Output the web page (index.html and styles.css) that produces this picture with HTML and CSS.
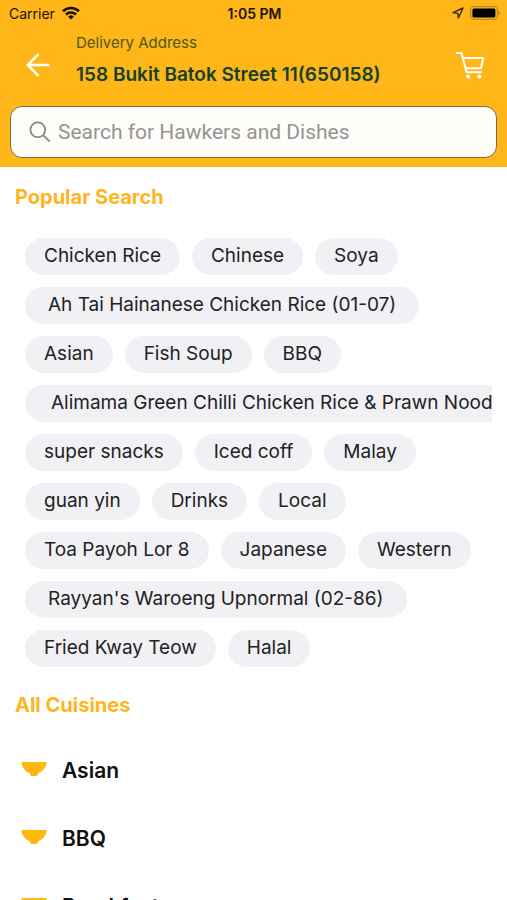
FILE: index.html
```html
<!DOCTYPE html>
<html lang="en">
<head>
<meta charset="utf-8">
<meta name="viewport" content="width=device-width, initial-scale=1">
<title>Search</title>
<link rel="stylesheet" href="styles.css">
</head>
<body>
<header class="top">
  <div class="status">
    <div class="status-left">
      <span>Carrier</span>
      <svg width="18" height="14" viewBox="0 0 18 14" fill="none" stroke="#1a1200" stroke-width="2.6">
        <path d="M1 5.200a11.500 11.500 0 0 1 16 0M3.900 8.500a7.400 7.400 0 0 1 10.200 0"/>
        <path d="M9 13.600L6.200 10.700a4 4 0 0 1 5.600 0z" fill="#1a1200" stroke="none"/>
      </svg>
    </div>
    <div class="status-time">1:05 PM</div>
    <div class="status-right">
      <svg width="12" height="12" viewBox="0 0 12 12" fill="none" stroke="#3b2c05" stroke-width="1.4" stroke-linejoin="round">
        <path d="M11 1L1 5.6l4.800.600.600 4.800z"/>
      </svg>
      <svg width="30" height="14" viewBox="0 0 30 14">
        <rect x=".6" y=".6" width="26.8" height="12.8" rx="3.6" fill="none" stroke="#c08a18" stroke-width="1.2"/>
        <rect x="2.4" y="2.4" width="23" height="9.2" rx="1.6" fill="#000"/>
        <path d="M28.400 4.800v4.400c1.800-.8 1.800-3.600 0-4.400z" fill="#a87a14"/>
      </svg>
    </div>
  </div>
  <div class="address">
    <button class="icon-btn" type="button" aria-label="Back">
      <svg width="24" height="24" viewBox="0 0 24 24" fill="none" stroke="#fff" stroke-width="2.4">
        <path d="M23.500 12H2M12.500 1.200L1.800 12l10.700 10.800"/>
      </svg>
    </button>
    <div class="address-text">
      <div class="address-label">Delivery Address</div>
      <div class="address-line">158 Bukit Batok Street 11(650158)</div>
    </div>
    <button class="icon-btn" type="button" aria-label="Cart">
      <svg width="30" height="28" viewBox="0 0 30 28" fill="none" stroke="#fff" stroke-width="2" stroke-linejoin="round">
        <path d="M.8 2h5.600l5.200 19.200h15.200"/>
        <path d="M7.800 7h20.400l-2.200 10.200H10.600"/>
        <circle cx="13" cy="25.400" r="2" fill="#fff" stroke="none"/>
        <circle cx="24.400" cy="25.400" r="2" fill="#fff" stroke="none"/>
      </svg>
    </button>
  </div>
  <label class="search">
    <svg width="22" height="22" viewBox="0 0 22 22" fill="none" stroke="#8a8a8a" stroke-width="1.8">
      <circle cx="8.800" cy="8.800" r="7.400"/>
      <path d="M14 14l6.800 6.600"/>
    </svg>
    <input type="text" placeholder="Search for Hawkers and Dishes" aria-label="Search for Hawkers and Dishes">
  </label>
</header>

<main class="content">
  <h2>Popular Search</h2>
  <div class="chips">
    <button type="button" class="chip">Chicken Rice</button>
    <button type="button" class="chip">Chinese</button>
    <button type="button" class="chip">Soya</button>
    <button type="button" class="chip chip-long">Ah Tai Hainanese Chicken Rice (01-07)</button>
    <button type="button" class="chip">Asian</button>
    <button type="button" class="chip">Fish Soup</button>
    <button type="button" class="chip">BBQ</button>
    <button type="button" class="chip chip-xlong">Alimama Green Chilli Chicken Rice &amp; Prawn Noodles</button>
    <button type="button" class="chip">super snacks</button>
    <button type="button" class="chip">Iced coff</button>
    <button type="button" class="chip">Malay</button>
    <button type="button" class="chip">guan yin</button>
    <button type="button" class="chip">Drinks</button>
    <button type="button" class="chip">Local</button>
    <button type="button" class="chip">Toa Payoh Lor 8</button>
    <button type="button" class="chip">Japanese</button>
    <button type="button" class="chip">Western</button>
    <button type="button" class="chip chip-long">Rayyan's Waroeng Upnormal (02-86)</button>
    <button type="button" class="chip">Fried Kway Teow</button>
    <button type="button" class="chip">Halal</button>
  </div>

  <h2>All Cuisines</h2>
  <ul class="cuisines">
    <li><a href="#"><svg width="26" height="16" viewBox="0 0 26 16"><path d="M.5 0h25c0 5-3 8.800-7.500 10.800-1 .6-1.500 1.400-1.800 3.200H9.800c-.3-1.800-.8-2.600-1.800-3.200C3.500 8.800.5 5 .5 0z" fill="#ffb80f"/></svg>Asian</a></li>
    <li><a href="#"><svg width="26" height="16" viewBox="0 0 26 16"><path d="M.5 0h25c0 5-3 8.800-7.500 10.800-1 .6-1.500 1.400-1.800 3.200H9.800c-.3-1.800-.8-2.600-1.800-3.200C3.500 8.800.5 5 .5 0z" fill="#ffb80f"/></svg>BBQ</a></li>
    <li><a href="#"><svg width="26" height="16" viewBox="0 0 26 16"><path d="M.5 0h25c0 5-3 8.800-7.500 10.800-1 .6-1.500 1.400-1.800 3.200H9.800c-.3-1.800-.8-2.600-1.800-3.200C3.500 8.800.5 5 .5 0z" fill="#ffb80f"/></svg>Breakfast</a></li>
  </ul>
</main>
</body>
</html>
```
FILE: styles.css
```css
* {box-sizing:border-box;}
body {margin:0; height:100vh; display:flex; flex-direction:column; background:#fff; font-family:Inter,"Open Sans",sans-serif; color:#222;}
button {border:0; margin:0; font-family:inherit; cursor:pointer;}
svg {display:block; flex:none;}

/* header */
.top {background:#ffb618; padding-bottom:9px; flex:none;}
.status {display:grid; grid-template-columns:1fr auto 1fr; align-items:center; height:26px; padding:0 7px 0 9px; font-size:14px; color:#1a1200;}
.status-left {display:flex; align-items:center; gap:7px;}
.status-time {font-weight:600;}
.status-right {display:flex; align-items:center; justify-content:flex-end; gap:6px;}

.address {display:flex; align-items:center; height:70px; padding:0 22px 0 26px;}
.icon-btn {background:none; padding:8px 0 0;}
.address-text {flex:1; padding-left:26px; white-space:nowrap;}
.address-label {font-size:15px; line-height:28px; color:#4d5a12;}
.address-line {font-size:19px; line-height:36px; font-weight:600; color:#17402a;}

.search {display:flex; align-items:center; gap:7px; height:52px; margin:10px 10px 0; padding:0 18px; background:#fffdf9; border:1px solid #7d6b3c; border-radius:12px;}
.search input {flex:1; min-width:0; border:0; padding:0; outline:0; background:none; font-family:Roboto,sans-serif; font-size:21px; color:#222;}
.search input::placeholder {color:#949494; opacity:1;}

/* body */
.content {flex:1; min-height:0; overflow-y:auto; scrollbar-width:none; padding:0 15px;}
h2 {margin:0; padding-top:16px; font-size:20px; line-height:28px; font-weight:700; color:#ffb41f;}
.chips {display:flex; flex-wrap:wrap; gap:12px; margin:27px 0 8px; padding-left:10px; overflow:hidden;}
.chip {flex:none; height:37px; padding:0 19px 2px; border-radius:19px; background:#f1f0f5; font-size:19px; color:#222; white-space:nowrap;}
.chip-long {padding:0 23px 2px;}
.chip-xlong {padding:0 26px 2px;}

.cuisines {list-style:none; margin:17px 0 0; padding:0;}
.cuisines a {display:flex; align-items:center; gap:15px; height:68px; padding-left:6px; font-size:21px; font-weight:600; color:#111; text-decoration:none;}
```
